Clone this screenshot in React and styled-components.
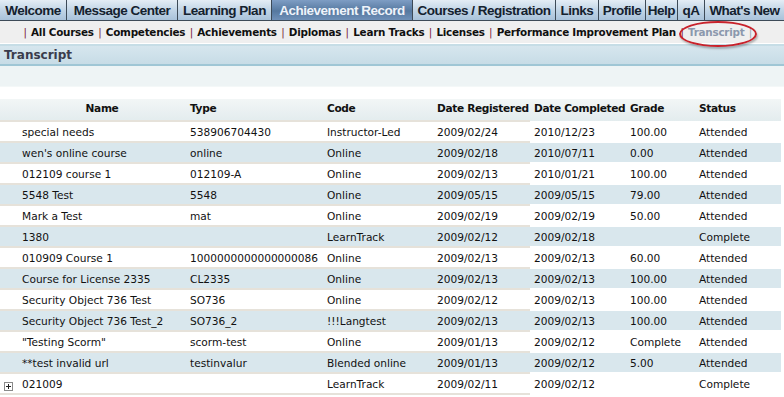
import React from 'react';
import styled, { createGlobalStyle } from 'styled-components';

const GlobalStyle = createGlobalStyle`
  body {
    margin: 0;
    background: #ffffff;
    font-family: "DejaVu Sans", Verdana, sans-serif;
  }
`;

const Page = styled.div`
  width: 784px;
  height: 397px;
  overflow: hidden;
  background: #ffffff;
`;

const TopNav = styled.div`
  display: flex;
  height: 20px;
  border-bottom: 1px solid #3d4a57;
`;

const Tab = styled.div`
  width: ${(p) => p.$w}px;
  box-sizing: border-box;
  display: flex;
  align-items: center;
  justify-content: center;
  border-right: 1px solid #3d4a57;
  font-family: "Liberation Sans", Arial, sans-serif;
  font-weight: bold;
  font-size: 13.5px;
  letter-spacing: -0.5px;
  white-space: nowrap;
  color: ${(p) => (p.$active ? '#eef3fa' : '#14212e')};
  background: ${(p) =>
    p.$active
      ? 'linear-gradient(#7e9dc4, #55789f 55%, #6f90b8)'
      : 'linear-gradient(#e4edf5, #c2d5e6 50%, #a9c2da)'};

  &:last-child {
    border-right: none;
  }
`;

const SubNav = styled.div`
  position: relative;
  display: flex;
  align-items: center;
  height: 22px;
  padding-left: 19px;
  background: #efefef;
  border-bottom: 1px solid #ffffff;
  font-size: 10.4px;
  font-weight: bold;
  letter-spacing: -0.25px;
  white-space: nowrap;
`;

const SubLink = styled.span`
  color: ${(p) => (p.$current ? '#8b98ad' : '#101010')};
`;

const Sep = styled.span`
  color: ${(p) => (p.$light ? '#9aa3b2' : '#7a2440')};
  font-weight: normal;
  margin: 0 4.4px;
`;

const Ring = styled.div`
  position: absolute;
  left: 679px;
  top: 0px;
  width: 74px;
  height: 22px;
  border: 2px solid #c8222b;
  border-radius: 50%;
  box-shadow: 1px 2px 2px rgba(0, 0, 0, 0.25);
`;

const SectionBar = styled.div`
  height: 18px;
  padding-left: 4px;
  display: flex;
  align-items: center;
  border-top: 2px solid #c6dde6;
  border-bottom: 2px solid #9fc6d5;
  background: linear-gradient(#d6e6ee, #c7dce6);
  color: #3a3c4c;
  font-size: 12px;
  font-weight: bold;
`;

const Band = styled.div`
  height: 20px;
  background: #eef4f5;
  border-bottom: 1px solid #f4f8f8;
`;

const Spacer = styled.div`
  height: 12px;
`;

const Table = styled.table`
  width: 781px;
  border-collapse: collapse;
  table-layout: fixed;
  font-size: 10.6px;
  color: #111111;
`;

const HeadRow = styled.tr`
  background: linear-gradient(#f2f6f6, #e3ecee);
`;

const HeadCell = styled.th`
  height: 18px;
  padding: 0 0 3px ${(p) => (p.$center ? 18 : 4)}px;
  text-align: ${(p) => (p.$center ? 'center' : 'left')};
  font-weight: bold;
  letter-spacing: -0.35px;
  white-space: nowrap;
  border-bottom: 2px solid #e6e2da;

  &:nth-child(n + 5) {
    border-bottom-color: transparent;
  }
`;

const Row = styled.tr`
  background: ${(p) => (p.$alt ? '#d9e7ed' : '#ffffff')};
`;

const Cell = styled.td`
  height: 19px;
  padding: 0 0 0 4px;
  white-space: nowrap;
  overflow: hidden;
  border-bottom: 2px solid #e6e2da;

  &:nth-child(n + 5) {
    border-bottom-color: transparent;
  }
`;

const NameWrap = styled.div`
  display: flex;
  align-items: center;
`;

const IconSlot = styled.span`
  width: 18px;
  flex: none;
  display: flex;
  align-items: center;
`;

const PlusBox = styled.span`
  width: 9px;
  height: 9px;
  margin-top: 4px;
  display: block;
`;

const tabs = [
  ['Welcome', 67],
  ['Message Center', 111],
  ['Learning Plan', 94],
  ['Achievement Record', 141, true],
  ['Courses / Registration', 143],
  ['Links', 43],
  ['Profile', 47],
  ['Help', 32],
  ['qA', 27],
  ["What's New", 79],
];

const subLinks = [
  'All Courses',
  'Competencies',
  'Achievements',
  'Diplomas',
  'Learn Tracks',
  'Licenses',
  'Performance Improvement Plan',
];

const rows = [
  ['special needs', '538906704430', 'Instructor-Led', '2009/02/24', '2010/12/23', '100.00', 'Attended'],
  ["wen's online course", 'online', 'Online', '2009/02/18', '2010/07/11', '0.00', 'Attended'],
  ['012109 course 1', '012109-A', 'Online', '2009/02/13', '2010/01/21', '100.00', 'Attended'],
  ['5548 Test', '5548', 'Online', '2009/05/15', '2009/05/15', '79.00', 'Attended'],
  ['Mark a Test', 'mat', 'Online', '2009/02/19', '2009/02/19', '50.00', 'Attended'],
  ['1380', '', 'LearnTrack', '2009/02/12', '2009/02/18', '', 'Complete'],
  ['010909 Course 1', '1000000000000000086', 'Online', '2009/02/13', '2009/02/13', '60.00', 'Attended'],
  ['Course for License 2335', 'CL2335', 'Online', '2009/02/13', '2009/02/13', '100.00', 'Attended'],
  ['Security Object 736 Test', 'SO736', 'Online', '2009/02/12', '2009/02/13', '100.00', 'Attended'],
  ['Security Object 736 Test_2', 'SO736_2', '!!!Langtest', '2009/02/13', '2009/02/13', '100.00', 'Attended'],
  ['"Testing Scorm"', 'scorm-test', 'Online', '2009/01/13', '2009/02/12', 'Complete', 'Attended'],
  ['**test invalid url', 'testinvalur', 'Blended online', '2009/01/13', '2009/02/12', '5.00', 'Attended'],
  ['021009', '', 'LearnTrack', '2009/02/11', '2009/02/12', '', 'Complete', true],
];

const widths = [186, 137, 110, 97, 96, 69, 86];

function Plus() {
  return (
    <PlusBox>
      <svg width="9" height="9" viewBox="0 0 9 9">
        <rect x="0.5" y="0.5" width="8" height="8" fill="#ffffff" stroke="#8a8a8a" />
        <path d="M2 4.5h5M4.5 2v5" stroke="#222222" strokeWidth="1" />
      </svg>
    </PlusBox>
  );
}

export default function App() {
  return (
    <Page>
      <GlobalStyle />
      <TopNav>
        {tabs.map(([label, w, active]) => (
          <Tab key={label} $w={w} $active={active}>
            {label}
          </Tab>
        ))}
      </TopNav>

      <SubNav>
        <Sep>|</Sep>
        {subLinks.map((s) => (
          <React.Fragment key={s}>
            <SubLink>{s}</SubLink>
            <Sep>|</Sep>
          </React.Fragment>
        ))}
        <SubLink $current>Transcript</SubLink>
        <Sep $light>|</Sep>
        <Ring />
      </SubNav>

      <SectionBar>Transcript</SectionBar>
      <Band />
      <Spacer />

      <Table>
        <colgroup>
          {widths.map((w, i) => (
            <col key={i} style={{ width: w }} />
          ))}
        </colgroup>
        <thead>
          <HeadRow>
            <HeadCell $center>Name</HeadCell>
            <HeadCell>Type</HeadCell>
            <HeadCell>Code</HeadCell>
            <HeadCell>Date Registered</HeadCell>
            <HeadCell>Date Completed</HeadCell>
            <HeadCell>Grade</HeadCell>
            <HeadCell>Status</HeadCell>
          </HeadRow>
        </thead>
        <tbody>
          {rows.map((r, i) => (
            <Row key={i} $alt={i % 2 === 1}>
              <Cell>
                <NameWrap>
                  <IconSlot>{r[7] && <Plus />}</IconSlot>
                  {r[0]}
                </NameWrap>
              </Cell>
              {r.slice(1, 7).map((v, j) => (
                <Cell key={j}>{v}</Cell>
              ))}
            </Row>
          ))}
        </tbody>
      </Table>
    </Page>
  );
}
